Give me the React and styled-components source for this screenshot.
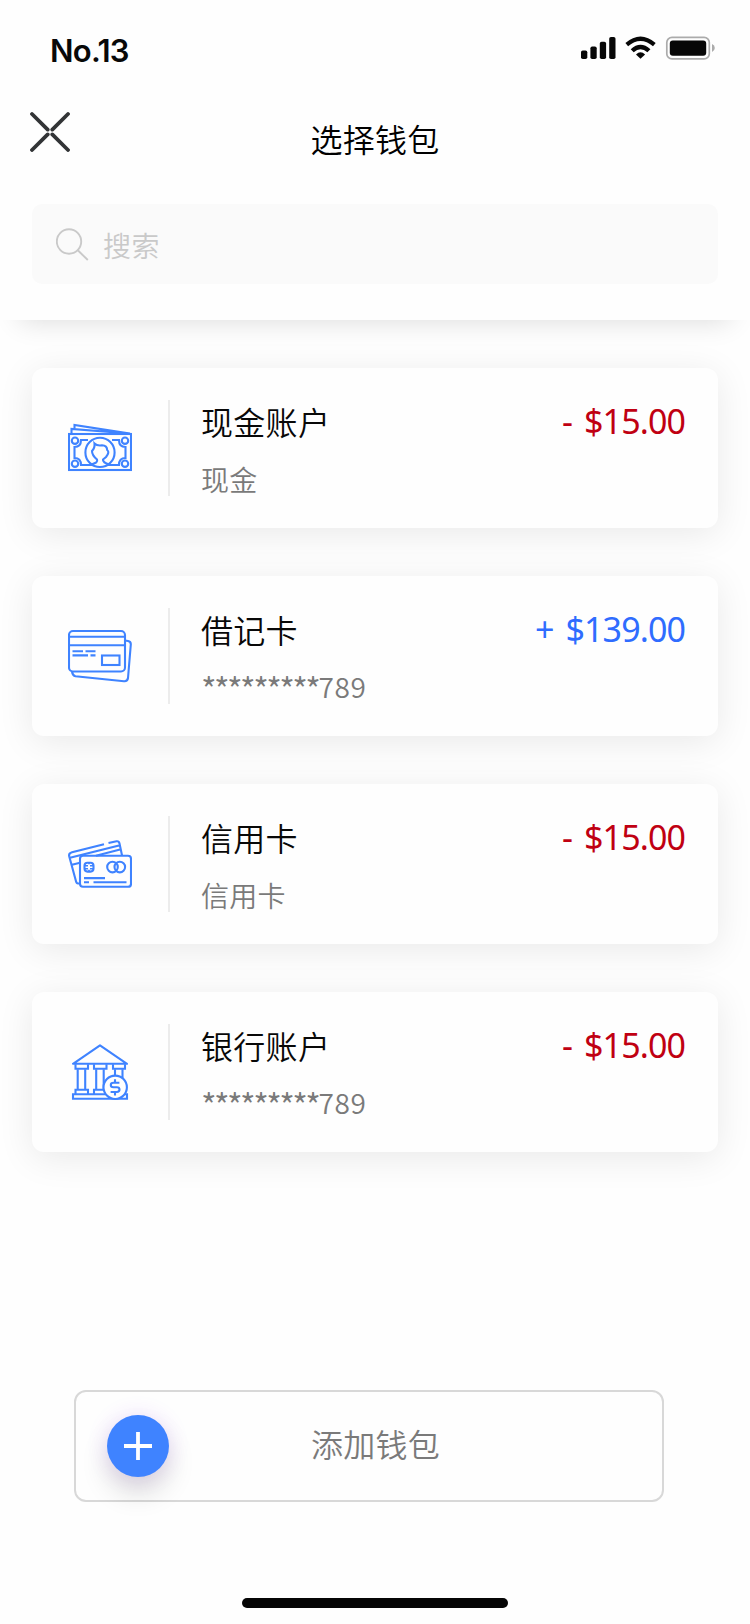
import React from 'react';
import styled, { createGlobalStyle } from 'styled-components';

const GlobalStyle = createGlobalStyle`
  * { box-sizing: border-box; }
  body { margin: 0; background: #fefefe; }
  button { font: inherit; }
`;

const Screen = styled.div`
  width: 750px;
  height: 1624px;
  overflow: hidden;
  display: flex;
  flex-direction: column;
  background: #fefefe;
  font-family: 'Noto Sans CJK SC', sans-serif;
  font-weight: 350;
  color: #080808;
`;

const Header = styled.header`
  height: 320px;
  flex: none;
  background: #fefefe;
  box-shadow: 0 21px 26px -20px rgba(0, 0, 0, 0.14);
`;

const StatusBar = styled.div`
  height: 96px;
  padding: 32px 35px 0 50px;
  display: flex;
  justify-content: space-between;
`;

const Carrier = styled.div`
  font: 600 31px/38px Inter, sans-serif;
  letter-spacing: -0.7px;
`;

const NavBar = styled.div`
  height: 108px;
  padding: 15px 30px 0;
  display: grid;
  grid-template-columns: 40px 1fr 40px;
`;

const CloseButton = styled.button`
  width: 40px;
  height: 40px;
  padding: 0;
  border: 0;
  background: none;
  svg { display: block; }
`;

const Title = styled.h1`
  margin: 3px 0 0;
  font-size: 32px;
  line-height: 48px;
  font-weight: 350;
  letter-spacing: 0.2px;
  text-align: center;
  color: #000;
`;

const SearchField = styled.div`
  height: 80px;
  margin: 0 32px;
  padding: 0 24px;
  display: flex;
  align-items: center;
  gap: 14px;
  border-radius: 10px;
  background: #fafafa;
  color: #c9c9c9;
  font-size: 28px;
  line-height: 40px;
`;

const SearchHint = styled.span`
  padding-top: 2px;
  letter-spacing: 0.4px;
`;

const WalletList = styled.main`
  height: 832px;
  padding: 48px 32px 0;
  display: flex;
  flex-direction: column;
  gap: 48px;
`;

const WalletCard = styled.article`
  height: 160px;
  flex: none;
  padding: 32px 33px 32px 36px;
  display: flex;
  border-radius: 12px;
  background: #fefefe;
  box-shadow: 0 6px 36px rgba(0, 0, 0, 0.085);
`;

const WalletIcon = styled.div`
  width: 100px;
  height: 96px;
  display: flex;
  align-items: center;
  flex: none;
`;

const WalletInfo = styled.div`
  flex: 1;
  padding-left: 31px;
  border-left: 2px solid #ececec;
`;

const WalletName = styled.div`
  height: 59px;
  font-size: 32px;
  line-height: 42px;
  letter-spacing: 0.3px;
`;

const WalletDetail = styled.div`
  height: 42px;
  font-size: 28px;
  line-height: 42px;
  letter-spacing: ${({ $masked }) => ($masked ? '0.7px' : '0.2px')};
  margin-top: ${({ $masked }) => ($masked ? '-2px' : '-1px')};
  color: #7a7a7a;
`;

const MaskedDigits = styled.span`
  font-size: 34px;
  line-height: 0;
  letter-spacing: -2.6px;
  vertical-align: -5px;
`;

const Amount = styled.div`
  font-family: 'Noto Sans', sans-serif;
  font-weight: 400;
  font-size: 34px;
  line-height: 42px;
  letter-spacing: -0.9px;
  word-spacing: -2px;
  white-space: pre;
  color: ${({ $positive }) => ($positive ? '#2f6cff' : '#c00012')};
`;

const AddButton = styled.button`
  width: 590px;
  height: 112px;
  margin: 238px 0 0 74px;
  padding: 0 30px 0 31px;
  display: grid;
  grid-template-columns: 62px 1fr 50px;
  align-items: center;
  flex: none;
  border: 2px solid #d8d8d8;
  border-radius: 12px;
  background: #fefefe;
  color: #7a7a7a;
  font-size: 32px;
`;

const AddLabel = styled.span`
  padding-bottom: 6px;
  letter-spacing: 0.2px;
`;

const AddBadge = styled.span`
  width: 62px;
  height: 62px;
  border-radius: 50%;
  background: #3f83ff;
  box-shadow: 0 0 22px rgba(150, 50, 255, 0.14), 0 16px 28px rgba(0, 0, 0, 0.14);
  svg { display: block; }
`;

const HomeIndicator = styled.div`
  width: 266px;
  height: 10px;
  margin: 96px auto 0;
  border-radius: 5px;
  background: #050505;
`;

const StatusIcons = () => (
  <svg width="136" height="30" viewBox="579 32 136 30" fill="#070707">
    <rect x="581" y="50.4" width="6.3" height="8.6" rx="1.8" />
    <rect x="590.4" y="46.4" width="6.3" height="12.6" rx="1.8" />
    <rect x="599.8" y="41.8" width="6.3" height="17.2" rx="1.8" />
    <rect x="609.2" y="37" width="6.3" height="22" rx="1.8" />
    <path d="M625.4 43.1Q640.5 30 655.7 43.1L653 46.3Q640.5 35.6 628.1 46.3Z" />
    <path d="M630.7 49.2Q640.5 40.4 650.4 49.2L647.4 52.3Q640.5 46.1 633.7 52.3Z" />
    <path d="M636 54.5Q640.5 49.9 645.1 54.5L640.5 58.8Z" />
    <rect x="666.8" y="37.3" width="42.5" height="21.6" rx="5.2" fill="none" stroke="#ababab" strokeWidth="1.7" />
    <rect x="669.8" y="40.5" width="36.4" height="15.2" rx="3" />
    <path d="M712 44Q714.8 45.2 714.8 48T712 52Z" fill="#ababab" />
  </svg>
);

const CloseIcon = () => (
  <svg width="40" height="41" viewBox="0 0 40 41" stroke="#323436" strokeWidth="3.8" strokeLinecap="round">
    <path d="M2 3 17.7 18.6M38 3 22.3 18.6M2 39 17.7 23.4M38 39 22.3 23.4" />
  </svg>
);

const SearchIcon = () => (
  <svg width="33" height="33" viewBox="0 0 33 33" fill="none" stroke="#c9c9c9" strokeWidth="1.9">
    <circle cx="13" cy="13.5" r="12.2" />
    <path d="m21.8 22.3 10 9.7" />
  </svg>
);

const LineIcon = ({ top = 0, children }) => (
  <svg width="64" height="64" viewBox={`0 ${top} 64 64`} fill="none" stroke="#3f83ff" strokeWidth="2.1">
    {children}
  </svg>
);

const CashIcon = () => (
  <LineIcon>
    <path d="M3.5 17V13L61 17.5M6.5 13V9L62 17.6" />
    <rect x="1" y="18" width="62" height="36" />
    <path d="M20 24H13C13 28.5 11 31 6.5 31V42C11 42 13 44.5 13 49H24M44 24H51C51 28.5 53 31 57.5 31V42C53 42 51 44.5 51 49H40" />
    <circle cx="7" cy="24.7" r="3.2" />
    <circle cx="57" cy="24.7" r="3.2" />
    <circle cx="7" cy="47.7" r="3.2" />
    <circle cx="57" cy="47.7" r="3.2" />
    <circle cx="32" cy="36.4" r="14.6" />
    <path d="M23.5 48.5C28 47 30 46 29 43.5C26 41 24 38 24 35Q27 32 26.5 27.5Q29 30 34 29.3Q39 29.5 39.2 34Q42 36 38 41L35 43.5C34.5 46 37 47 41 48.5" />
  </LineIcon>
);

const DebitIcon = () => (
  <LineIcon top={2}>
    <rect x="1" y="9" width="56" height="40.5" rx="4" />
    <path d="M1 14.7H57M1 23.2H57M4.5 29.2H15M17.5 29.2H27.5M4.5 33.4H20M22.5 33.4H27.5" />
    <rect x="34" y="33.5" width="17.5" height="9.5" />
    <path d="M57 18.5 60 19Q63 19.5 62.8 22.5L60 56Q59.5 59.5 56 59.2L7.5 54.2Q4.5 53.5 4 49.5" />
  </LineIcon>
);

const CreditIcon = () => (
  <LineIcon top={1.7}>
    <rect x="12" y="25.5" width="51" height="31" rx="3" />
    <path d="M12 53.2H10Q8.5 53.2 8 51L1.2 26Q.5 23 4 22L36 14M40.5 12.8 48.5 11Q51 10.7 51.5 13.2L54 25M2 27.5 52 15M4 34.5 12 32.5M28 25.5 53 19M16 47.8H37M16 52H21M25.5 52H58.5" />
    <rect x="16.5" y="32.5" width="9" height="8.8" rx="3" />
    <path d="M16.5 35.5H20M16.5 38.4H20M22 35.5H25.5M22 38.4H25.5M21 32.5V34M21 39.5V41" strokeWidth="1.6" />
    <circle cx="44.5" cy="36.8" r="5.3" />
    <circle cx="51.8" cy="36.8" r="5.3" />
  </LineIcon>
);

const BankIcon = () => (
  <LineIcon top={3.7}>
    <path d="M5 27.5 32 9 59 27.5Z" strokeLinejoin="round" />
    <path d="M7.5 28V32.5H20V28M26 28V32.5H38.5V28M45 28V32.5H57V28" />
    <path d="M9.7 33V53M17.2 33V53M28.2 33V53M35.7 33V53M47 33V40M54.5 33V42M7.5 57V53.5H20V57M26 57V53.5H38.5V57M5 62.5V58H59V62.5Z" />
    <circle cx="47.2" cy="51" r="11.7" fill="#fefefe" />
    <path d="M51.4 46.5H45.5Q42.8 46.5 42.8 48.7T45.5 51H48.8Q51.5 51 51.5 53.3T48.8 55.7H42.6M47 43V46.5M47 55.7V59.2" />
  </LineIcon>
);

const PlusIcon = () => (
  <svg width="62" height="62" viewBox="0 0 62 62" stroke="#fff" strokeWidth="3.8">
    <path d="M17 31H45M31 17V45" />
  </svg>
);

const wallets = [
  { name: '现金账户', detail: '现金', amount: '-  $15.00', Icon: CashIcon },
  { name: '借记卡', mask: '*********', detail: '789', amount: '+  $139.00', positive: true, Icon: DebitIcon },
  { name: '信用卡', detail: '信用卡', amount: '-  $15.00', Icon: CreditIcon },
  { name: '银行账户', mask: '*********', detail: '789', amount: '-  $15.00', Icon: BankIcon },
];

export default function App() {
  return (
    <Screen>
      <GlobalStyle />
      <Header>
        <StatusBar>
          <Carrier>No.13</Carrier>
          <StatusIcons />
        </StatusBar>
        <NavBar>
          <CloseButton aria-label="关闭"><CloseIcon /></CloseButton>
          <Title>选择钱包</Title>
        </NavBar>
        <SearchField>
          <SearchIcon />
          <SearchHint>搜索</SearchHint>
        </SearchField>
      </Header>
      <WalletList>
        {wallets.map(({ name, detail, mask, amount, positive, Icon }) => (
          <WalletCard key={name}>
            <WalletIcon><Icon /></WalletIcon>
            <WalletInfo>
              <WalletName>{name}</WalletName>
              <WalletDetail $masked={Boolean(mask)}>
                {mask && <MaskedDigits>{mask}</MaskedDigits>}
                {detail}
              </WalletDetail>
            </WalletInfo>
            <Amount $positive={positive}>{amount}</Amount>
          </WalletCard>
        ))}
      </WalletList>
      <AddButton>
        <AddBadge><PlusIcon /></AddBadge>
        <AddLabel>添加钱包</AddLabel>
      </AddButton>
      <HomeIndicator />
    </Screen>
  );
}
